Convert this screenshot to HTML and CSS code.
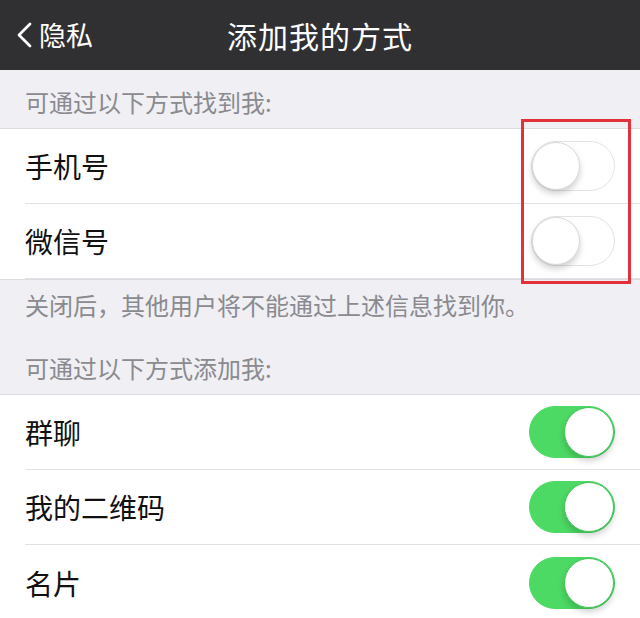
FILE: index.html
```html
<!DOCTYPE html>
<html lang="zh-CN">
<head>
    <meta charset="UTF-8">
    <meta name="viewport" content="width=device-width, initial-scale=1.0">
    <title>添加我的方式</title>
    <link rel="stylesheet" href="styles.css">
</head>
<body>
    <div class="navbar">
        <a class="back" href="#">
            <svg class="back-icon" width="20" height="30" viewBox="0 0 20 30">
                <polyline points="16,4 5,15 16,26" fill="none" stroke="#fff" stroke-width="2.8" stroke-linecap="round" stroke-linejoin="round"/>
            </svg>
            <span>隐私</span>
        </a>
        <h1>添加我的方式</h1>
    </div>

    <p class="group-title">可通过以下方式找到我:</p>
    <div class="list">
        <div class="row">
            <span class="label">手机号</span>
            <span class="switch"></span>
        </div>
        <div class="row">
            <span class="label">微信号</span>
            <span class="switch"></span>
        </div>
        <div class="mark"></div>
    </div>
    <p class="group-note">关闭后，其他用户将不能通过上述信息找到你。</p>

    <p class="group-title spaced">可通过以下方式添加我:</p>
    <div class="list">
        <div class="row">
            <span class="label">群聊</span>
            <span class="switch on"></span>
        </div>
        <div class="row">
            <span class="label">我的二维码</span>
            <span class="switch on"></span>
        </div>
        <div class="row">
            <span class="label">名片</span>
            <span class="switch on"></span>
        </div>
    </div>
</body>
</html>
```

FILE: styles.css
```css
body {
    font-family: "Noto Sans CJK SC", "Liberation Sans", sans-serif;
    background-color: #efeff4;
    margin: 0;
    padding: 0;
    overflow: hidden;
}
.navbar {
    height: 70px;
    background-color: #303032;
    display: flex;
    align-items: center;
    justify-content: center;
    position: relative;
}
.navbar h1 {
    margin: 0;
    color: #fff;
    font-size: 30px;
    font-weight: 400;
    letter-spacing: 1px;
}
.back {
    position: absolute;
    left: 14px;
    top: 20px;
    display: flex;
    align-items: center;
    gap: 5px;
    color: #fff;
    text-decoration: none;
    font-size: 27px;
}
.back span {
    line-height: 30px;
}

.group-title {
    margin: 0;
    padding: 17px 25px 11px;
    font-size: 24px;
    line-height: 30px;
    color: #8a8a8f;
}
.group-title.spaced {
    padding-top: 33px;
}
.group-note {
    margin: 0;
    padding: 10px 25px 0;
    font-size: 24px;
    line-height: 30px;
    color: #8a8a8f;
}

.list {
    background-color: #fff;
    border-top: 1px solid #dcdce0;
    border-bottom: 1px solid #dcdce0;
    position: relative;
}
.row {
    height: 74px;
    margin-left: 25px;
    padding-right: 25px;
    display: flex;
    align-items: center;
    justify-content: space-between;
    border-bottom: 1px solid #e2e2e6;
}
.row:last-of-type {
    border-bottom: none;
    height: 75px;
}
.label {
    font-size: 28px;
    color: #111;
}

/* iOS style switch */
.switch {
    width: 84px;
    height: 50px;
    border-radius: 26px;
    border: 1px solid #e3e3e6;
    background-color: #fff;
    position: relative;
    box-sizing: border-box;
}
.switch::after {
    content: "";
    position: absolute;
    left: 0;
    top: 0;
    width: 48px;
    height: 48px;
    border-radius: 50%;
    background-color: #fff;
    border: 1px solid #dadada;
    box-sizing: border-box;
    box-shadow: 0 4px 6px rgba(0, 0, 0, 0.18);
}
.switch.on {
    width: 86px;
    height: 52px;
    background-color: #4cd964;
    border-color: #4cd964;
}
.switch.on::after {
    left: auto;
    right: 0;
    width: 50px;
    height: 50px;
    border-color: #44c45a;
}

/* red outline around the first group's switches */
.mark {
    position: absolute;
    top: -10px;
    left: 521px;
    width: 110px;
    height: 165px;
    border: 3px solid #e3313b;
    box-sizing: border-box;
}
```
